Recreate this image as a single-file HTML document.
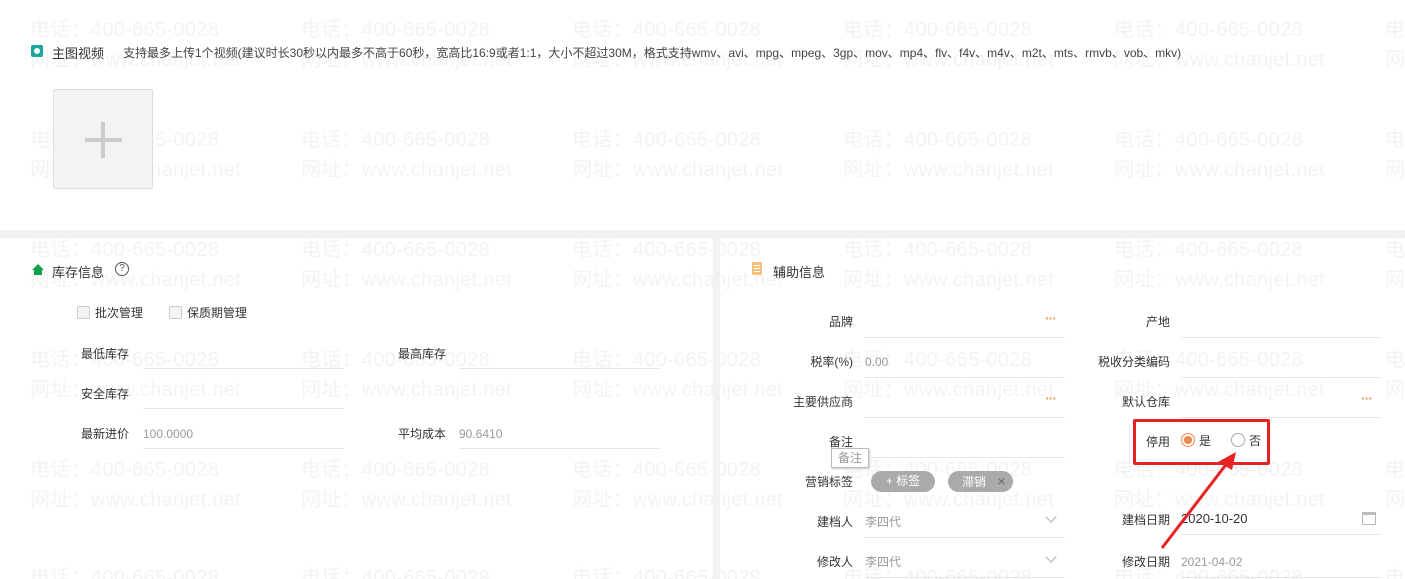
<!DOCTYPE html>
<html><head><meta charset="utf-8"><style>
*{margin:0;padding:0;box-sizing:border-box}
html,body{width:1405px;height:579px;overflow:hidden}
body{background:#fff;position:relative;font-family:"Liberation Sans","Noto Sans CJK SC",sans-serif;font-size:12px;color:#333}
#wrap{position:absolute;left:0;top:0;width:1405px;height:579px;overflow:hidden}
.a{position:absolute;white-space:nowrap}
.wm{position:absolute;white-space:nowrap;font-size:20px;color:#f3f3f3;line-height:24px;letter-spacing:0.3px}
.l{position:absolute;height:1px;background:#e6e6e6}
.lb{position:absolute;white-space:nowrap;font-size:12px;color:#333;line-height:14px}
.r{text-align:right}
.g{color:#999}
.cb{position:absolute;width:13px;height:13px;border:1px solid #ccc;border-radius:2px;background:#f4f4f4}
.dots{position:absolute;color:#f0a060;font-size:14px;font-weight:bold;letter-spacing:-1px}
</style></head><body><div id="wrap">
<div id="wm"></div>
<script>
var cols=[30,301,572,843,1114,1385],rows=[18,128,238,348,458],h='';
rows.forEach(function(y){cols.forEach(function(x){h+='<div class="wm" style="left:'+x+'px;top:'+y+'px">电话：400-665-0028</div><div class="wm" style="left:'+x+'px;top:'+(y+30)+'px">网址：www.chanjet.net</div>';});});
cols.forEach(function(x){h+='<div class="wm" style="left:'+x+'px;top:566px;height:13px;overflow:hidden">电话：400-665-0028</div>';});
document.getElementById('wm').innerHTML=h;
</script>
<div class="a" style="left:31px;top:45px;width:12px;height:12px;background:#1aa89a;border-radius:2px"><div style="position:absolute;left:3px;top:3px;width:6px;height:6px;border-radius:50%;background:#fff"></div></div>
<div class="a" style="left:52px;top:43px;font-size:13px;color:#333">主图视频</div>
<div class="a" style="left:123px;top:44px;font-size:12px;color:#444">支持最多上传1个视频(建议时长30秒以内最多不高于60秒，宽高比16:9或者1:1，大小不超过30M，格式支持wmv、avi、mpg、mpeg、3gp、mov、mp4、flv、f4v、m4v、m2t、mts、rmvb、vob、mkv)</div>
<div class="a" style="left:53px;top:89px;width:100px;height:100px;background:#f2f3f5;border:1px solid #ddd;border-radius:2px">
<div style="position:absolute;left:31px;top:48px;width:37px;height:4px;background:#ccc"></div>
<div style="position:absolute;left:47px;top:32px;width:4px;height:36px;background:#ccc"></div></div>
<div class="a" style="left:0;top:230px;width:1405px;height:8px;background:#f2f2f2"></div>
<div class="a" style="left:713px;top:238px;width:7px;height:341px;background:#f2f2f2"></div>
<div class="a" style="left:32px;top:264px;width:0;height:0;border-left:6px solid transparent;border-right:6px solid transparent;border-bottom:6px solid #14a04a"></div>
<div class="a" style="left:34px;top:269px;width:8px;height:6px;background:#14a04a"></div>
<div class="a" style="left:52px;top:262px;font-size:13px">库存信息</div>
<div class="a" style="left:115px;top:262px;width:14px;height:14px;border:1px solid #555;border-radius:50%;font-size:10px;text-align:center;line-height:12px;color:#555">?</div>
<div class="cb" style="left:77px;top:306px"></div><div class="lb" style="left:95px;top:306px">批次管理</div>
<div class="cb" style="left:169px;top:306px"></div><div class="lb" style="left:187px;top:306px">保质期管理</div>
<div class="lb" style="left:81px;top:347px">最低库存</div><div class="l" style="left:143px;top:368px;width:200px"></div>
<div class="lb" style="left:398px;top:347px">最高库存</div><div class="l" style="left:459px;top:368px;width:201px"></div>
<div class="lb" style="left:81px;top:387px">安全库存</div><div class="l" style="left:143px;top:408px;width:200px"></div>
<div class="lb" style="left:81px;top:427px">最新进价</div><div class="lb g" style="left:143px;top:427px">100.0000</div><div class="l" style="left:143px;top:448px;width:200px"></div>
<div class="lb" style="left:398px;top:427px">平均成本</div><div class="lb g" style="left:459px;top:427px">90.6410</div><div class="l" style="left:459px;top:448px;width:201px"></div>
<div class="a" style="left:752px;top:262px;width:10px;height:13px;background:#f6c07a;border-radius:1px"><div style="position:absolute;left:2px;top:3px;width:6px;height:1px;background:#fff"></div><div style="position:absolute;left:2px;top:6px;width:6px;height:1px;background:#fff"></div><div style="position:absolute;left:2px;top:9px;width:6px;height:1px;background:#fff"></div></div>
<div class="a" style="left:773px;top:262px;font-size:13px">辅助信息</div>
<div class="lb r" style="left:753px;width:100px;top:315px">品牌</div><div class="l" style="left:865px;top:337px;width:200px"></div><div class="dots" style="left:1045px;top:310px">···</div>
<div class="lb r" style="left:1070px;width:100px;top:315px">产地</div><div class="l" style="left:1181px;top:337px;width:200px"></div>
<div class="lb r" style="left:753px;width:100px;top:355px">税率(%)</div><div class="lb g" style="left:865px;top:355px">0.00</div><div class="l" style="left:865px;top:377px;width:200px"></div>
<div class="lb r" style="left:1070px;width:100px;top:355px">税收分类编码</div><div class="l" style="left:1181px;top:377px;width:200px"></div>
<div class="lb r" style="left:753px;width:100px;top:395px">主要供应商</div><div class="l" style="left:865px;top:417px;width:200px"></div><div class="dots" style="left:1045px;top:390px">···</div>
<div class="lb r" style="left:1070px;width:100px;top:395px">默认仓库</div><div class="l" style="left:1181px;top:417px;width:200px"></div><div class="dots" style="left:1361px;top:390px">···</div>
<div class="lb r" style="left:753px;width:100px;top:435px">备注</div><div class="l" style="left:865px;top:457px;width:200px"></div>
<div class="a" style="left:831px;top:448px;width:38px;height:20px;border:1px solid #bbb;background:#fff;box-shadow:1px 1px 2px #ccc;color:#999;font-size:12px;text-align:center;line-height:18px">备注</div>
<div class="lb r" style="left:753px;width:100px;top:475px">营销标签</div>
<div class="a" style="left:871px;top:471px;width:64px;height:21px;border-radius:11px;background:#aaa;color:#fff;font-size:12px;text-align:center;line-height:21px">+ 标签</div>
<div class="a" style="left:948px;top:471px;width:65px;height:21px;border-radius:11px;background:#aaa;color:#fff;font-size:12px;line-height:21px;padding-left:14px">滞销 <span style="margin-left:8px;color:#666;font-size:14px">×</span></div>
<div class="lb r" style="left:753px;width:100px;top:515px">建档人</div><div class="lb g" style="left:865px;top:515px">李四代</div><div class="l" style="left:865px;top:537px;width:200px"></div>
<div class="a" style="left:1047px;top:513px;width:8px;height:8px;border-right:1px solid #aaa;border-bottom:1px solid #aaa;transform:rotate(45deg)"></div>
<div class="lb r" style="left:753px;width:100px;top:555px">修改人</div><div class="lb g" style="left:865px;top:555px">李四代</div><div class="l" style="left:865px;top:577px;width:200px"></div>
<div class="a" style="left:1047px;top:553px;width:8px;height:8px;border-right:1px solid #aaa;border-bottom:1px solid #aaa;transform:rotate(45deg)"></div>
<div class="lb r" style="left:1070px;width:100px;top:435px">停用</div>
<div class="a" style="left:1181px;top:433px;width:14px;height:14px;border:1px solid #f0884a;border-radius:50%"><div style="position:absolute;left:2px;top:2px;width:8px;height:8px;border-radius:50%;background:#f0884a"></div></div>
<div class="lb" style="left:1199px;top:434px">是</div>
<div class="a" style="left:1231px;top:433px;width:14px;height:14px;border:1px solid #aaa;border-radius:50%"></div>
<div class="lb" style="left:1249px;top:434px">否</div>
<div class="a" style="left:1133px;top:419px;width:137px;height:46px;border:3px solid #e52222;border-radius:2px"></div>
<div class="lb r" style="left:1070px;width:100px;top:513px">建档日期</div><div class="lb" style="left:1181px;top:512px;font-size:13px">2020-10-20</div><div class="l" style="left:1181px;top:534px;width:200px"></div>
<div class="a" style="left:1362px;top:512px;width:14px;height:13px;border:1px solid #bbb;border-top-width:3px"></div>
<div class="lb r" style="left:1070px;width:100px;top:555px">修改日期</div><div class="lb g" style="left:1181px;top:555px">2021-04-02</div><div class="l" style="left:1181px;top:577px;width:200px"></div>
<svg class="a" style="left:0;top:0" width="1405" height="579"><line x1="1162" y1="548" x2="1228" y2="462" stroke="#e52222" stroke-width="3"/><polygon points="1236,452 1218,462 1232,470" fill="#e52222"/></svg>
</div></body></html>
